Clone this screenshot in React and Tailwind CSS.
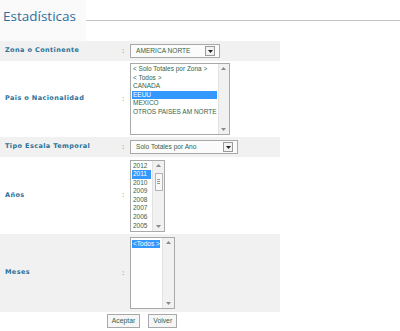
import React from 'react';

const sans = { fontFamily: '"Liberation Sans", Arial, sans-serif' };

function Arrow({ up, color = '#8a8a8a' }) {
    return (
        <svg width="5" height="3" viewBox="0 0 5 3">
            <path d={up ? 'M0 3 L2.5 0 L5 3 Z' : 'M0 0 L5 0 L2.5 3 Z'} fill={color} />
        </svg>
    );
}

function Select({ value, className }) {
    return (
        <div className={`flex items-center h-[14px] border border-[#a9a9a9] bg-[#fbfbfb] pl-[5px] pr-[4px] ${className}`}>
            <span className="flex-1 text-[6.6px] leading-none text-[#34634b]" style={sans}>{value}</span>
            <span className="flex items-center justify-center w-[10px] h-[10px] border border-[#9a9a9a] bg-[#f3f3f3]">
                <Arrow color="#222" />
            </span>
        </div>
    );
}

function ListBox({ items, selected, className, itemClass, thumb }) {
    return (
        <div className={`flex h-[72px] border border-[#a9a9a9] bg-white ${className}`}>
            <div className="flex-1 flex flex-col px-[1px] pt-[1px]">
                {items.map(item => (
                    <div
                        key={item}
                        className={`${itemClass} pl-[1px] text-[6.5px] whitespace-nowrap ${item === selected ? 'bg-[#3399ff] text-white' : 'text-[#34634b]'}`}
                        style={sans}
                    >
                        {item}
                    </div>
                ))}
            </div>
            <div className="w-[12px] flex flex-col items-center bg-[#f1f1f1] border-l border-[#e2e2e2] py-[3px]">
                <Arrow up />
                {thumb && (
                    <div className="mt-[6px] w-[8px] h-[18px] border border-[#b5b5b5] bg-[#f8f8f8] flex flex-col items-center justify-center gap-[1px]">
                        <div className="w-[3px] h-[1px] bg-[#999]" />
                        <div className="w-[3px] h-[1px] bg-[#999]" />
                        <div className="w-[3px] h-[1px] bg-[#999]" />
                    </div>
                )}
                <div className="flex-1" />
                <Arrow />
            </div>
        </div>
    );
}

function Row({ label, children, gray, h }) {
    return (
        <div className={`grid grid-cols-[122px_8px_1fr] items-center ${h} ${gray ? 'bg-[#f1f1f1]' : 'bg-white'}`}>
            <span
                className="pl-[5px] text-[6.5px] font-bold tracking-[0.4px] text-[#2c7198]"
                style={{ fontFamily: '"DejaVu Sans", Verdana, sans-serif' }}
            >
                {label}
            </span>
            <span className="text-[7px] text-[#555]" style={{ fontFamily: '"DejaVu Sans", Verdana, sans-serif' }}>:</span>
            <div className="flex items-center">{children}</div>
        </div>
    );
}

export default function App() {
    const years = ['2012', '2011', '2010', '2009', '2008', '2007', '2006', '2005'];

    return (
        <div className="w-[400px] h-[331px] bg-white overflow-hidden">
            <div className="flex items-end h-[41px]">
                <div className="w-[86px] h-[41px] bg-[#fafafa] pl-[3px] pt-[7px]">
                    <h1 className="text-[13.5px] leading-[18px] text-[#2f6f9f]" style={{ fontFamily: '"Open Sans", sans-serif' }}>
                        Estadísticas
                    </h1>
                </div>
                <div className="flex-1 self-start mt-[20px] h-[1px] bg-[#c4c4c4]" />
            </div>

            <div className="w-[280px]">
                <Row label="Zona o Continente" gray h="h-[20px]">
                    <Select value="AMERICA NORTE" className="w-[90px]" />
                </Row>
                <Row label="Pais o Nacionalidad" h="h-[76px]">
                    <ListBox
                        className="w-[100px]"
                        itemClass="leading-[8.5px]"
                        items={['< Solo Totales por Zona >', '< Todos >', 'CANADA', 'EEUU', 'MEXICO', 'OTROS PAISES AM NORTE']}
                        selected="EEUU"
                    />
                </Row>
                <Row label="Tipo Escala Temporal" gray h="h-[20px]">
                    <Select value="Solo Totales por Ano" className="w-[108px]" />
                </Row>
                <Row label="Años" h="h-[77px]">
                    <ListBox className="w-[35px]" itemClass="leading-[8.6px]" items={years} selected="2011" thumb />
                </Row>
                <Row label="Meses" gray h="h-[78px]">
                    <ListBox className="w-[45px]" itemClass="leading-[8px] mt-[1px] mr-[1px]" items={['<Todos >']} selected="<Todos >" />
                </Row>
                <div className="flex justify-center gap-[8px] pt-[2px] pl-[4px]">
                    <button className="h-[14px] px-[4px] border border-[#a9a9a9] bg-[#f6f6f6] text-[6.8px] leading-none text-[#34634b]" style={sans}>
                        Aceptar
                    </button>
                    <button className="h-[14px] px-[4px] border border-[#a9a9a9] bg-[#f6f6f6] text-[6.8px] leading-none text-[#34634b]" style={sans}>
                        Volver
                    </button>
                </div>
            </div>
        </div>
    );
}
